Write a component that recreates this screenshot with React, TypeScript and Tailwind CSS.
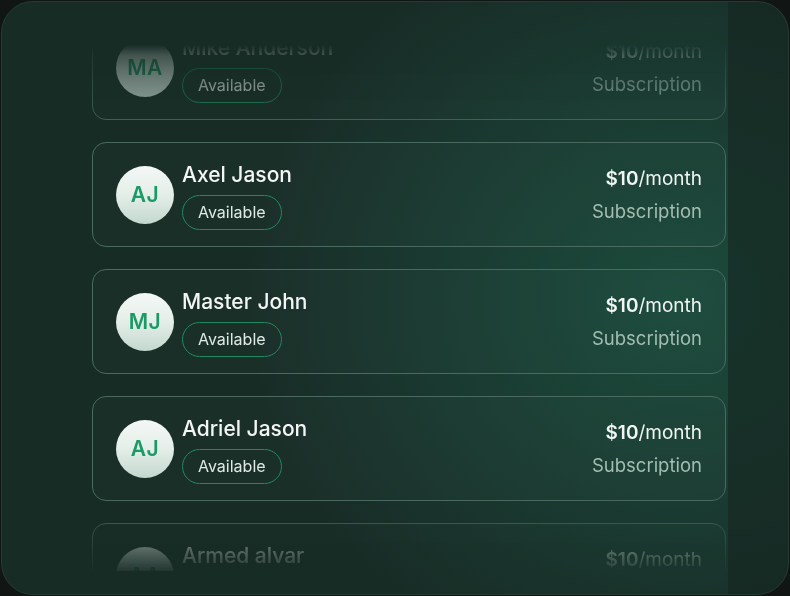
import React from "react";

type Person = { initials: string; name: string };

const people: Person[] = [
  { initials: "MA", name: "Mike Anderson" },
  { initials: "AJ", name: "Axel Jason" },
  { initials: "MJ", name: "Master John" },
  { initials: "AJ", name: "Adriel Jason" },
  { initials: "AA", name: "Armed alvar" },
];

function Row({ p }: { p: Person }) {
  return (
    <div className="flex h-[105px] shrink-0 items-center justify-between rounded-[14px] border border-[#4b6a5f] bg-[rgba(255,255,255,0.015)] pl-[23px] pr-[23px]">
      <div className="flex items-center gap-[8px]">
        <div className="flex h-[58px] w-[58px] items-center justify-center rounded-full bg-[linear-gradient(180deg,#f4f8f6_0%,#e4eee9_50%,#c3d8ce_100%)]">
          <span className="text-[21px] font-semibold leading-none tracking-[0.5px] text-[#1c9a66]">
            {p.initials}
          </span>
        </div>
        <div className="flex flex-col items-start gap-[8px] pt-[3px]">
          <span className="text-[21px] font-medium leading-[24px] text-[#f3f6f4]">{p.name}</span>
          <span className="flex h-[35px] items-center rounded-full border border-[#1e8a5f] px-[15px] text-[16px] leading-none text-[#dfe9e4]">
            Available
          </span>
        </div>
      </div>
      <div className="flex flex-col items-end gap-[10px] pt-[1px]">
        <span className="text-[19px] leading-[22px] text-[#f1f5f3]">
          <span className="font-semibold">$10</span>/month
        </span>
        <span className="text-[18.5px] leading-[22px] text-[#a3bdb2]">Subscription</span>
      </div>
    </div>
  );
}

export default function App() {
  return (
    <div
      className="h-[596px] w-[790px] bg-[#111614] p-[1px]"
      style={{ fontFamily: "Inter, 'Noto Sans', sans-serif" }}
    >
      <div className="h-full w-full overflow-hidden rounded-[32px] border border-[#263a33] bg-[linear-gradient(90deg,rgba(0,0,0,0)_726px,rgba(20,36,31,0.6)_726px),radial-gradient(ellipse_55%_65%_at_86%_50%,#1b4b3b_0%,#1a3c32_50%,#182c26_100%)]">
        <div className="mt-[43px] flex h-[526px] justify-start overflow-hidden pl-[90px] [mask-image:linear-gradient(to_bottom,transparent_0px,rgba(0,0,0,0.2)_10px,black_95px,black_455px,rgba(0,0,0,0.35)_500px,transparent_531px)]">
          <div className="-mt-[30px] flex w-[634px] flex-col gap-[22px]">
            {people.map((p, i) => (
              <Row key={i} p={p} />
            ))}
          </div>
        </div>
      </div>
    </div>
  );
}
